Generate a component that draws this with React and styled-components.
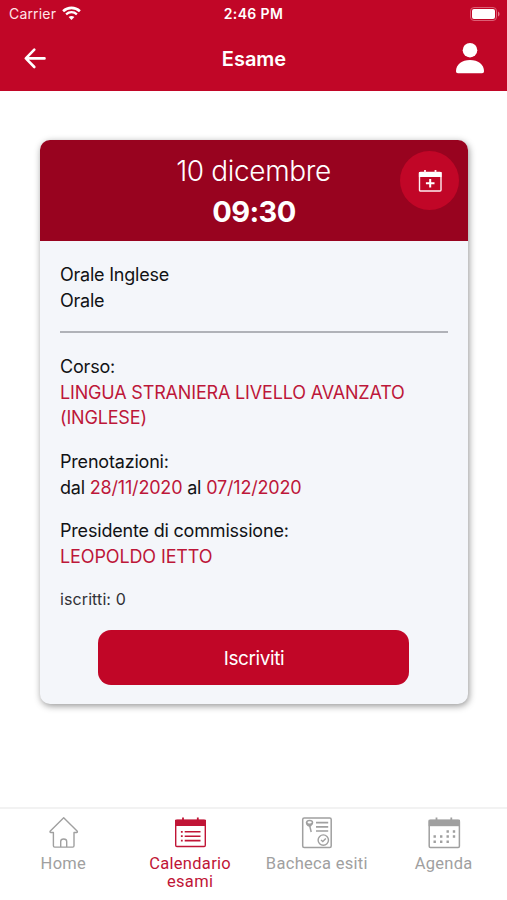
import React from "react";
import styled, { createGlobalStyle } from "styled-components";

const RED = "#c10627";

const GlobalStyle = createGlobalStyle`
  * { box-sizing: border-box; }
  body { margin: 0; background: #fff; }
`;

const Screen = styled.div`
  display: flex;
  flex-direction: column;
  width: 507px;
  height: 900px;
  overflow: hidden;
  background: #fff;
  font-family: Inter, "Noto Sans", sans-serif;
  color: #111215;
`;

const StatusBar = styled.div`
  display: grid;
  grid-template-columns: 1fr auto 1fr;
  align-items: center;
  height: 28px;
  padding: 0 7px 0 9px;
  background: ${RED};
  color: #fff;
  font-size: 14px;
  line-height: 28px;
`;

const Carrier = styled.div`
  display: flex;
  align-items: center;
  gap: 6px;
  height: 28px;
  padding-bottom: 1px;
  color: #ffe4e8;
  letter-spacing: 0.18px;
`;

const Clock = styled.div`
  padding-right: 2px;
  font-size: 14px;
  font-weight: 600;
  letter-spacing: 0.35px;
`;

const Battery = styled.div`
  display: flex;
  justify-content: flex-end;
  padding-bottom: 1px;
`;

const Header = styled.header`
  display: grid;
  grid-template-columns: 60px 1fr 60px;
  align-items: center;
  height: 63px;
  padding: 0 18px 3px 18px;
  background: ${RED};
  color: #fff;
`;

const Title = styled.h1`
  margin: 0;
  padding: 1px 0 0 1px;
  text-align: center;
  font-size: 20px;
  font-weight: 600;
  line-height: 24px;
`;

const IconButton = styled.button`
  display: flex;
  justify-content: ${({ $end }) => ($end ? "flex-end" : "flex-start")};
  padding: 0 5px;
  border: 0;
  background: none;
  color: #fff;
`;

const Main = styled.main`
  flex: 1;
  padding: 49px 39px 0 40px;
`;

const Card = styled.section`
  height: 564px;
  border-radius: 10px;
  overflow: hidden;
  background: #f4f6fa;
  box-shadow: 1px 2px 7px rgba(0, 0, 0, 0.42);
`;

const CardHead = styled.div`
  position: relative;
  height: 101px;
  padding-top: 11px;
  background: #98031f;
  color: #fff;
  text-align: center;
`;

const ExamDate = styled.div`
  padding-right: 1px;
  font-size: 28px;
  font-weight: 350;
  line-height: 41px;
  letter-spacing: -0.35px;
`;

const ExamTime = styled(ExamDate)`
  padding-right: 0;
  font-size: 29px;
  font-weight: 700;
  line-height: 40px;
  letter-spacing: -0.6px;
`;

const AddButton = styled.button`
  position: absolute;
  top: 11px;
  right: 9px;
  display: grid;
  place-items: center;
  width: 59px;
  height: 59px;
  padding: 0;
  border: 0;
  border-radius: 50%;
  background: ${RED};
`;

const CardBody = styled.div`
  display: flex;
  flex-direction: column;
  padding: 21px 20px 0;
`;

const Block = styled.div`
  margin-bottom: 18px;
  font-size: 18px;
  line-height: 25.7px;
`;

const Line = styled.div`
  white-space: nowrap;
  letter-spacing: ${({ $spacing = -0.19 }) => $spacing}px;
`;

const Accent = styled.span`
  color: #bd1739;
`;

const Divider = styled.hr`
  width: 100%;
  height: 2px;
  margin: 0 0 20.5px;
  border: 0;
  background: #b0b2b8;
`;

const Enrolled = styled.div`
  font-size: 16px;
  line-height: 22px;
  color: #303136;
  letter-spacing: 0.1px;
`;

const PrimaryButton = styled.button`
  align-self: center;
  width: 311px;
  height: 55px;
  margin: 20px 1px 0 0;
  padding: 2px 0 0 1px;
  border: 0;
  border-radius: 13px;
  background: ${RED};
  color: #fff;
  font-family: inherit;
  font-size: 19px;
  letter-spacing: -0.4px;
`;

const TabBar = styled.nav`
  display: grid;
  grid-template-columns: repeat(4, 1fr);
  height: 93px;
  border-top: 2px solid #f2f2f2;
  background: #fff;
`;

const Tab = styled.a`
  display: flex;
  flex-direction: column;
  align-items: center;
  padding-top: 7px;
  color: ${({ $active }) => ($active ? "#c01536" : "#a0a0a0")};
  font-family: Roboto, sans-serif;
  font-size: 16.5px;
  font-weight: ${({ $active }) => ($active ? 450 : 400)};
  line-height: 18px;
  text-align: center;
  letter-spacing: 0.3px;
`;

const TabLabel = styled.span`
  margin-top: 5px;
`;

const WifiIcon = () => (
  <svg width="19" height="15" viewBox="0 0 19 15" fill="none" stroke="#fff">
    <path d="M1.1 5.2C5.9.7 13.1.7 17.9 5.2" strokeWidth="2.6" />
    <path d="M4.1 8.3c3.1-2.9 7.7-2.9 10.8 0" strokeWidth="2.3" />
    <path d="M6.6 11.1c1.7-1.5 4.1-1.5 5.8 0l-2.9 3z" fill="#fff" stroke="none" />
  </svg>
);

const BatteryIcon = () => (
  <svg width="30" height="14" viewBox="0 0 30 14">
    <rect x=".5" y=".5" width="26" height="13" rx="3.5" fill="none" stroke="#dc5f75" />
    <rect x="2" y="2" width="23" height="10" rx="2" fill="#fff" />
    <path d="M28 4.5c2 .8 2 4.2 0 5z" fill="#e5798b" />
  </svg>
);

const BackIcon = () => (
  <svg width="24" height="22" viewBox="0 0 24 22" fill="none" stroke="currentColor" strokeWidth="2.6" strokeLinecap="round" strokeLinejoin="round">
    <path d="M21.5 11.4H3M11.3 2.6 2.8 11.4l8.5 8.6" />
  </svg>
);

const UserIcon = () => (
  <svg width="28" height="32" viewBox="0 0 28 32" fill="currentColor">
    <circle cx="14" cy="8.2" r="7.3" />
    <path d="M0 29.1C0 22.3 6 17.9 14 17.9S28 22.3 28 29.1c0 1.6-.7 2.2-2 2.2H2c-1.3 0-2-.6-2-2.2z" />
  </svg>
);

const AddCalendarIcon = () => (
  <svg width="24" height="24" viewBox="0 0 24 24" fill="none" stroke="#ffeef1">
    <rect x="1.5" y="3.5" width="21.5" height="18.5" rx="1" strokeWidth="1.4" />
    <path d="M.9 3.1h22.7v4.8H.9z" fill="#fff" stroke="none" />
    <path d="M7 1.1V4M17.5 1.1V4" strokeWidth="1.8" />
    <path d="M12.2 9.9v8.6M7.9 14.2h8.6" strokeWidth="2" stroke="#fff" />
  </svg>
);

const tabIcon = { width: 34, height: 34, viewBox: "0 0 34 34", fill: "none", stroke: "currentColor" };

const HomeIcon = () => (
  <svg {...tabIcon} strokeWidth="1.4" strokeLinejoin="round">
    <path d="M17.7 1.8 4.1 15.3c-.3.6 0 1.2.7 1.2h2.6v13.2c0 1 .4 1.4 1.3 1.4h18c.9 0 1.3-.4 1.3-1.4V16.5h2.6c.7 0 1-.6.7-1.2z" />
    <path d="M14.7 31v-5.5c0-3.3 6-3.3 6 0V31" />
  </svg>
);

const ExamsIcon = () => (
  <svg {...tabIcon}>
    <rect x="2.7" y="4.2" width="29.6" height="26.3" rx="1.2" strokeWidth="1.4" />
    <path d="M2 3.8h31V10H2z" fill="currentColor" stroke="none" />
    <path d="M10 1.5V5M24.8 1.5V5" strokeWidth="1.8" />
    <path d="M11.7 15.8h15.8M11.7 20.2h15.8M11.7 24.6h15.8" strokeWidth="1.6" />
    <path d="M7.9 15.8h1.8M7.9 20.2h1.8M7.9 24.6h1.8" strokeWidth="1.8" />
  </svg>
);

const BoardIcon = () => (
  <svg {...tabIcon} strokeWidth="1.5">
    <rect x="2.7" y="1.9" width="28.5" height="29.6" rx="1.5" />
    <path d="M16 6.6h12.2M16 10.9h12.2M16 15h12.2" strokeWidth="1.7" />
    <ellipse cx="9.6" cy="6.4" rx="2.9" ry="1.9" strokeWidth="1.5" />
    <path d="M6.4 6.2c.2 2.6 1.8 4 4.1 3.6l1.9-2.6" strokeWidth="1.5" />
    <path d="m9.6 9.5 1.6 6.5" strokeWidth="1.5" />
    <circle cx="23.3" cy="24.1" r="5.2" strokeWidth="1.4" />
    <path d="m21 23.9 1.8 1.6 3-3.1" strokeWidth="1.4" />
  </svg>
);

const AgendaIcon = () => (
  <svg {...tabIcon}>
    <rect x="2.2" y="4.2" width="30.2" height="27.2" rx="1.2" strokeWidth="1.5" />
    <path d="M1.6 3.8H33v6.4H1.6z" fill="currentColor" stroke="none" />
    <path d="M9.5 1.5V5M24.3 1.5V5" strokeWidth="1.8" />
    <path d="M19.5 15.5h2.4M25.8 15.5h2.4M6.5 20.5h2.4M13 20.5h2.4M19.5 20.5h2.4M25.8 20.5h2.4M6.5 25.8h2.4M13 25.8h2.4M19.5 25.8h2.4" strokeWidth="2.4" />
  </svg>
);

export default function App() {
  return (
    <>
      <GlobalStyle />
      <Screen>
        <StatusBar>
          <Carrier>Carrier <WifiIcon /></Carrier>
          <Clock>2:46 PM</Clock>
          <Battery><BatteryIcon /></Battery>
        </StatusBar>
        <Header>
          <IconButton aria-label="Indietro"><BackIcon /></IconButton>
          <Title>Esame</Title>
          <IconButton $end aria-label="Profilo"><UserIcon /></IconButton>
        </Header>
        <Main>
          <Card>
            <CardHead>
              <ExamDate>10 dicembre</ExamDate>
              <ExamTime>09:30</ExamTime>
              <AddButton aria-label="Aggiungi al calendario"><AddCalendarIcon /></AddButton>
            </CardHead>
            <CardBody>
              <Block>
                <Line $spacing={-0.23}>Orale Inglese</Line>
                <Line $spacing={-0.23}>Orale</Line>
              </Block>
              <Divider />
              <Block>
                <Line>Corso:</Line>
                <Line $spacing={-0.17}><Accent>LINGUA STRANIERA LIVELLO AVANZATO</Accent></Line>
                <Line $spacing={-0.17}><Accent>(INGLESE)</Accent></Line>
              </Block>
              <Block>
                <Line>Prenotazioni:</Line>
                <Line>dal <Accent>28/11/2020</Accent> al <Accent>07/12/2020</Accent></Line>
              </Block>
              <Block>
                <Line>Presidente di commissione:</Line>
                <Line $spacing={-0.12}><Accent>LEOPOLDO IETTO</Accent></Line>
              </Block>
              <Enrolled>iscritti: 0</Enrolled>
              <PrimaryButton>Iscriviti</PrimaryButton>
            </CardBody>
          </Card>
        </Main>
        <TabBar>
          <Tab><HomeIcon /><TabLabel>Home</TabLabel></Tab>
          <Tab $active><ExamsIcon /><TabLabel>Calendario<br />esami</TabLabel></Tab>
          <Tab><BoardIcon /><TabLabel>Bacheca esiti</TabLabel></Tab>
          <Tab><AgendaIcon /><TabLabel>Agenda</TabLabel></Tab>
        </TabBar>
      </Screen>
    </>
  );
}
